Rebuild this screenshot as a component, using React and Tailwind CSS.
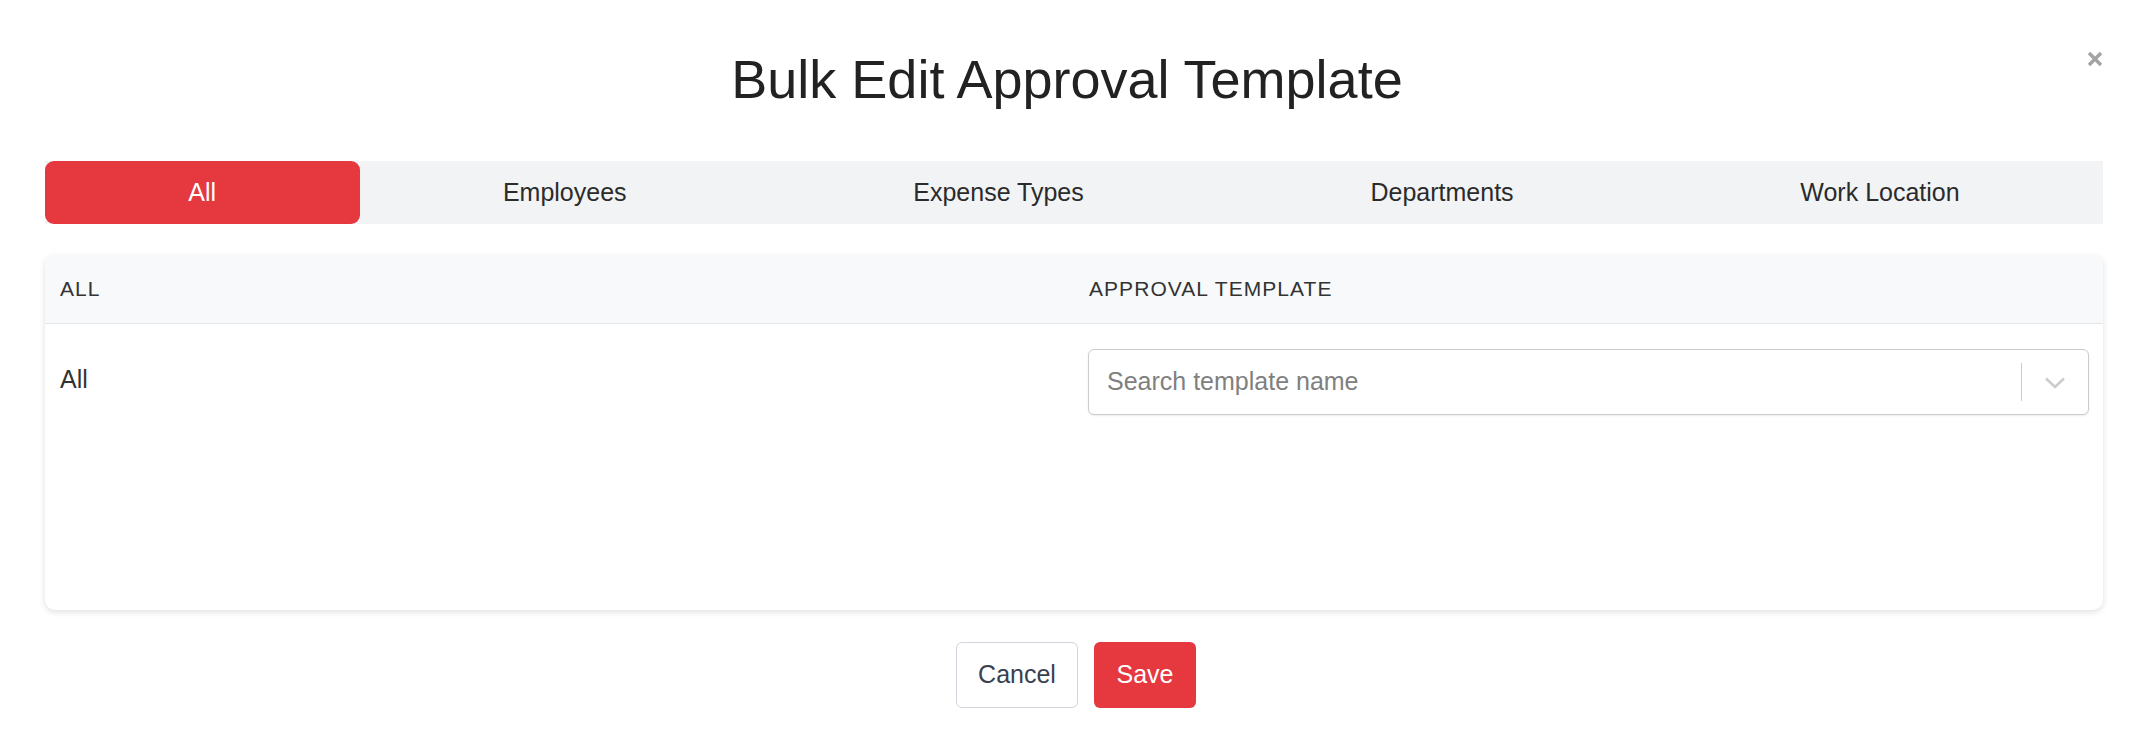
import React from "react";

const tabs = ["All", "Employees", "Expense Types", "Departments", "Work Location"];

function CloseIcon() {
  return (
    <svg width="18" height="18" viewBox="0 0 18 18" className="text-[#a3a3a3]">
      <path d="M3 3L15 15M15 3L3 15" stroke="currentColor" strokeWidth="3.4" strokeLinecap="butt" />
    </svg>
  );
}

function Chevron() {
  return (
    <svg width="24" height="15" viewBox="0 0 24 15" className="text-[#cccccc]">
      <path d="M3 3.5L12 12L21 3.5" fill="none" stroke="currentColor" strokeWidth="2.6" />
    </svg>
  );
}

export default function App() {
  return (
    <div className="relative w-[2146px] h-[734px] bg-white font-['Liberation_Sans',Arial,sans-serif] text-[#333333] pl-[45px] pr-[43px] pt-[48px]">
      <button className="absolute right-[42px] top-[50px] p-0">
        <CloseIcon />
      </button>

      <h1 className="text-center text-[54px] leading-[62px] text-[#222222] pr-[14px]">
        Bulk Edit Approval Template
      </h1>

      <div className="mt-[51px] flex bg-[#f2f3f5] h-[63px]">
        {tabs.map((t, i) => (
          <div
            key={t}
            className={
              i === 0
                ? "flex-auto flex items-center justify-center bg-[#e5383f] text-white rounded-[9px] text-[25px]"
                : "flex-auto flex items-center justify-center text-[#2b2b2b] text-[25px]"
            }
          >
            {t}
          </div>
        ))}
      </div>

      <div className="mt-[31px] rounded-[10px] bg-white shadow-[0_2px_6px_rgba(0,0,0,0.13)] overflow-hidden">
        <div className="grid grid-cols-2 h-[69px] bg-[#f8f9fa] border-b border-[#e3e5e8] items-center text-[21px] tracking-[0.05em] text-[#333333]">
          <div className="px-[15px]">ALL</div>
          <div className="px-[15px]">APPROVAL TEMPLATE</div>
        </div>
        <div className="grid grid-cols-2 h-[286px] pt-[25px]">
          <div className="px-[15px] pt-[14px] text-[25px] leading-[32px] text-[#333333]">All</div>
          <div className="px-[14px]">
            <div className="flex items-center h-[66px] border border-[#cccccc] rounded-[6px] shadow-[0_1px_2px_rgba(0,0,0,0.08)] bg-white">
              <div className="flex-1 pl-[18px] text-[25px] text-[#808080]">Search template name</div>
              <div className="w-px h-[38px] bg-[#cccccc]" />
              <div className="w-[66px] flex items-center justify-center">
                <Chevron />
              </div>
            </div>
          </div>
        </div>
      </div>

      <div className="mt-[32px] flex justify-center gap-[16px] pl-[4px]">
        <button className="h-[66px] w-[122px] border border-[#d1d5db] rounded-[6px] bg-white text-[25px] text-[#374151]">
          Cancel
        </button>
        <button className="h-[66px] w-[102px] rounded-[6px] bg-[#e5383f] text-[25px] text-white">
          Save
        </button>
      </div>
    </div>
  );
}
